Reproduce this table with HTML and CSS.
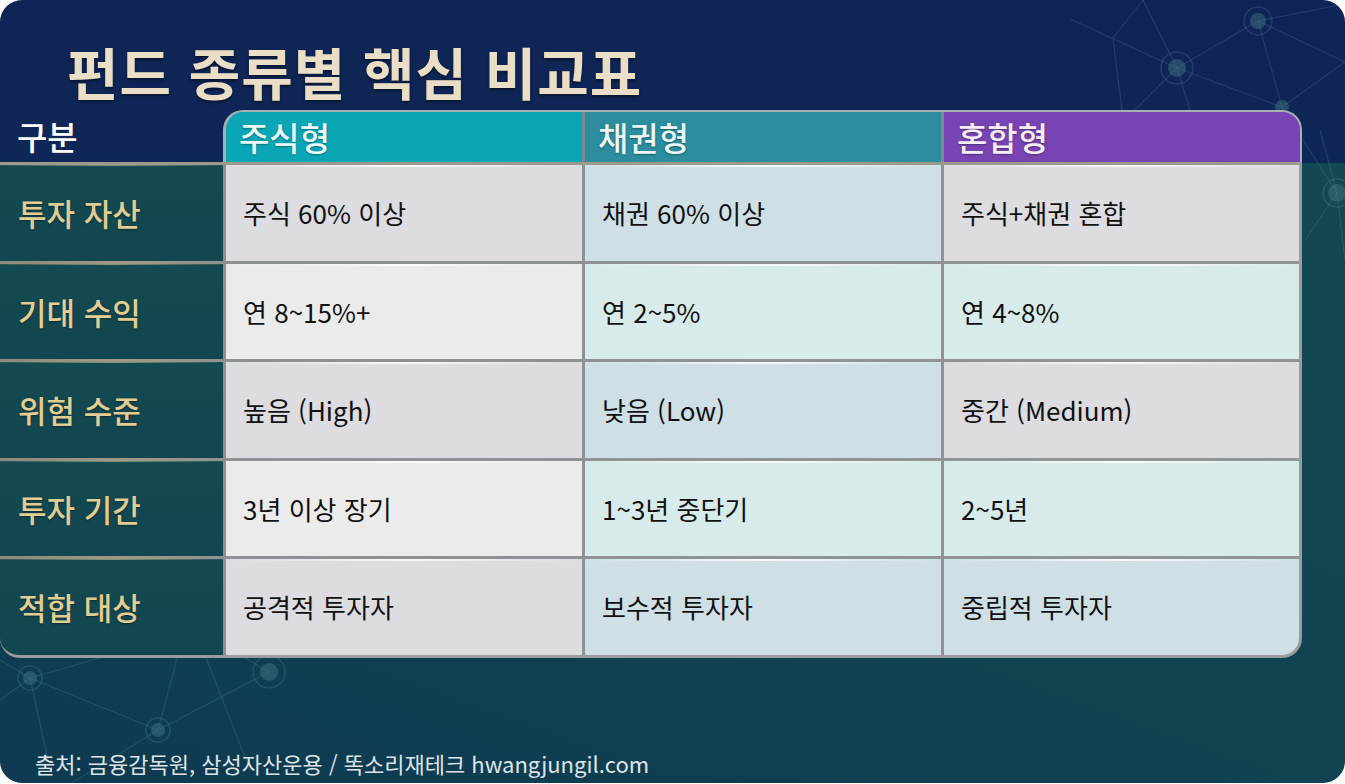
FILE: index.html
```html
<!DOCTYPE html>
<html lang="ko">
<head>
<meta charset="utf-8">
<title>펀드 종류별 핵심 비교표</title>
<link rel="stylesheet" href="styles.css">
</head>
<body>
<div class="card">
  <svg class="network" width="1345" height="784" viewBox="0 0 1345 784" aria-hidden="true">
    <g class="net-lines">
      <line x1="1070" y1="19" x2="1177" y2="68"/>
      <line x1="1113" y1="38" x2="1143" y2="0"/>
      <line x1="1113" y1="38" x2="1122" y2="110"/>
      <line x1="1143" y1="0" x2="1177" y2="68"/>
      <line x1="1177" y1="68" x2="1258" y2="21"/>
      <line x1="1177" y1="68" x2="1135" y2="110"/>
      <line x1="1177" y1="68" x2="1190" y2="110"/>
      <line x1="1177" y1="68" x2="1282" y2="107"/>
      <line x1="1258" y1="21" x2="1345" y2="4"/>
      <line x1="1258" y1="21" x2="1282" y2="107"/>
      <line x1="1258" y1="21" x2="1345" y2="62"/>
      <line x1="1345" y1="62" x2="1282" y2="107"/>
      <line x1="1282" y1="107" x2="1337" y2="193"/>
      <line x1="1337" y1="193" x2="1345" y2="260"/>
      <line x1="1320" y1="130" x2="1337" y2="193"/>
      <line x1="1337" y1="193" x2="1305" y2="240"/>
      <line x1="0" y1="660" x2="30" y2="678"/>
      <line x1="30" y1="678" x2="110" y2="655"/>
      <line x1="30" y1="678" x2="158" y2="730"/>
      <line x1="30" y1="678" x2="48" y2="760"/>
      <line x1="30" y1="678" x2="0" y2="700"/>
      <line x1="158" y1="730" x2="269" y2="672"/>
      <line x1="158" y1="730" x2="178" y2="655"/>
      <line x1="158" y1="730" x2="70" y2="784"/>
      <line x1="269" y1="672" x2="240" y2="655"/>
      <line x1="205" y1="655" x2="250" y2="770"/>
    </g>
    <g class="net-rings">
      <circle cx="1258" cy="21" r="14"/>
      <circle cx="1177" cy="68" r="16"/>
      <circle cx="1337" cy="193" r="14"/>
      <circle cx="30" cy="678" r="12"/>
      <circle cx="269" cy="672" r="16"/>
      <circle cx="158" cy="730" r="12"/>
    </g>
    <g class="net-dots">
      <circle cx="1258" cy="21" r="8"/>
      <circle cx="1177" cy="68" r="9"/>
      <circle cx="1282" cy="107" r="7"/>
      <circle cx="1337" cy="193" r="9"/>
      <circle cx="30" cy="678" r="7"/>
      <circle cx="269" cy="672" r="9"/>
      <circle cx="158" cy="730" r="7"/>
    </g>
  </svg>

  <h1 class="title">펀드 종류별 핵심 비교표</h1>

  <div class="table">
    <div class="thead">
      <div class="corner">구분</div>
      <div class="heads">
        <div class="head head-stock">주식형</div>
        <div class="head head-bond">채권형</div>
        <div class="head head-mix">혼합형</div>
      </div>
    </div>
    <div class="tbody">
      <div class="label">투자 자산</div>
      <div class="cell gray">주식 60% 이상</div>
      <div class="cell blue">채권 60% 이상</div>
      <div class="cell gray">주식+채권 혼합</div>

      <div class="label">기대 수익</div>
      <div class="cell light">연 8~15%+</div>
      <div class="cell mint">연 2~5%</div>
      <div class="cell mint">연 4~8%</div>

      <div class="label">위험 수준</div>
      <div class="cell gray">높음 (High)</div>
      <div class="cell blue">낮음 (Low)</div>
      <div class="cell gray">중간 (Medium)</div>

      <div class="label">투자 기간</div>
      <div class="cell light">3년 이상 장기</div>
      <div class="cell mint">1~3년 중단기</div>
      <div class="cell mint">2~5년</div>

      <div class="label">적합 대상</div>
      <div class="cell gray">공격적 투자자</div>
      <div class="cell blue">보수적 투자자</div>
      <div class="cell blue">중립적 투자자</div>
    </div>
  </div>

  <p class="source">출처: 금융감독원, 삼성자산운용 / 똑소리재테크 hwangjungil.com</p>
</div>
</body>
</html>
```

FILE: styles.css
```css
* { box-sizing: border-box; }

html, body {
  margin: 0;
  padding: 0;
  background: #ffffff;
}

body {
  font-family: "Noto Sans CJK KR", "Noto Sans", sans-serif;
}

.card {
  position: relative;
  width: 1345px;
  height: 783px;
  border-radius: 22px;
  overflow: hidden;
  background:
    linear-gradient(180deg, #0e2454 0, #0f2757 163px, transparent 163px),
    linear-gradient(200deg, #124a52 0%, #114550 45%, #0f3a51 100%);
  display: flex;
  flex-direction: column;
}

.network {
  position: absolute;
  left: 0;
  top: 0;
  pointer-events: none;
}

.net-lines line {
  stroke: rgba(110, 150, 175, 0.22);
  stroke-width: 1.2;
}

.net-rings circle {
  fill: none;
  stroke: rgba(110, 155, 175, 0.22);
  stroke-width: 1.5;
}

.net-dots circle {
  fill: rgba(70, 120, 135, 0.45);
}

.title {
  position: relative;
  margin: 0;
  padding: 32px 0 0 67px;
  height: 110px;
  font-size: 56px;
  line-height: 78px;
  font-weight: 700;
  color: #eadfc6;
  letter-spacing: 1px;
  text-shadow: 0 2px 3px rgba(0, 0, 0, 0.45);
}

.table {
  position: relative;
  width: 1302px;
}

.thead {
  display: flex;
  height: 52px;
}

.corner {
  width: 223px;
  padding-left: 17px;
  display: flex;
  align-items: center;
  font-size: 33px;
  font-weight: 500;
  color: #ffffff;
}

.heads {
  flex: 1;
  display: grid;
  grid-template-columns: 356px 356px 356px;
  column-gap: 3px;
  background: #7d8a92;
  border: 2px solid #a7b0b5;
  border-left-width: 3px;
  border-bottom: 0;
  border-radius: 20px 20px 0 0;
  overflow: hidden;
}

.head {
  display: flex;
  align-items: center;
  padding-left: 13px;
  font-size: 33px;
  font-weight: 500;
  text-shadow: 0 1px 2px rgba(0, 0, 0, 0.35);
}

.head-stock { background: #0aa6b5; color: #eaf9f8; }
.head-bond { background: #2b8d9d; color: #eaf6f6; }
.head-mix { background: #7844b4; color: #f6ecf8; }

.tbody {
  display: grid;
  grid-template-columns: 223px 356px 356px 356px;
  grid-auto-rows: 95.5px;
  gap: 3px;
  background: linear-gradient(90deg, #8c8a7e 0, #a09a82 120px, #8e9193 226px, #919496 100%);
  border: 3px solid #9a9d9f;
  border-left: 0;
  border-top-color: #9c9a8c;
  border-radius: 0 0 20px 20px;
  overflow: hidden;
}

.label {
  display: flex;
  align-items: center;
  padding-left: 18px;
  font-size: 31px;
  font-weight: 500;
  color: #e2cd93;
  background:
    linear-gradient(90deg, rgba(200, 180, 120, 0.1), rgba(230, 210, 150, 0.55) 50%, rgba(200, 180, 120, 0.1)) top / 100% 1px no-repeat,
    linear-gradient(180deg, #144a52, #124650);
  text-shadow: 0 1px 2px rgba(0, 0, 0, 0.4);
}

.cell {
  display: flex;
  align-items: center;
  padding-left: 17px;
  font-size: 26px;
  font-weight: 400;
  color: #111111;
}

.gray {
  background:
    linear-gradient(90deg, rgba(255, 255, 255, 0), rgba(255, 255, 255, 0.85) 50%, rgba(255, 255, 255, 0)) top / 100% 2px no-repeat,
    #dcdce1;
}
.light {
  background:
    linear-gradient(90deg, rgba(255, 255, 255, 0), rgba(255, 255, 255, 0.85) 50%, rgba(255, 255, 255, 0)) top / 100% 2px no-repeat,
    #ebebec;
}
.blue {
  background:
    linear-gradient(90deg, rgba(255, 255, 255, 0), rgba(255, 255, 255, 0.85) 50%, rgba(255, 255, 255, 0)) top / 100% 2px no-repeat,
    #cee0e6;
}
.mint {
  background:
    linear-gradient(90deg, rgba(255, 255, 255, 0), rgba(255, 255, 255, 0.85) 50%, rgba(255, 255, 255, 0)) top / 100% 2px no-repeat,
    #d7ebea;
}

.source {
  position: relative;
  margin: auto 0 0 0;
  padding: 0 0 2px 35px;
  font-size: 22px;
  line-height: 36px;
  color: #dde5e9;
}
```
